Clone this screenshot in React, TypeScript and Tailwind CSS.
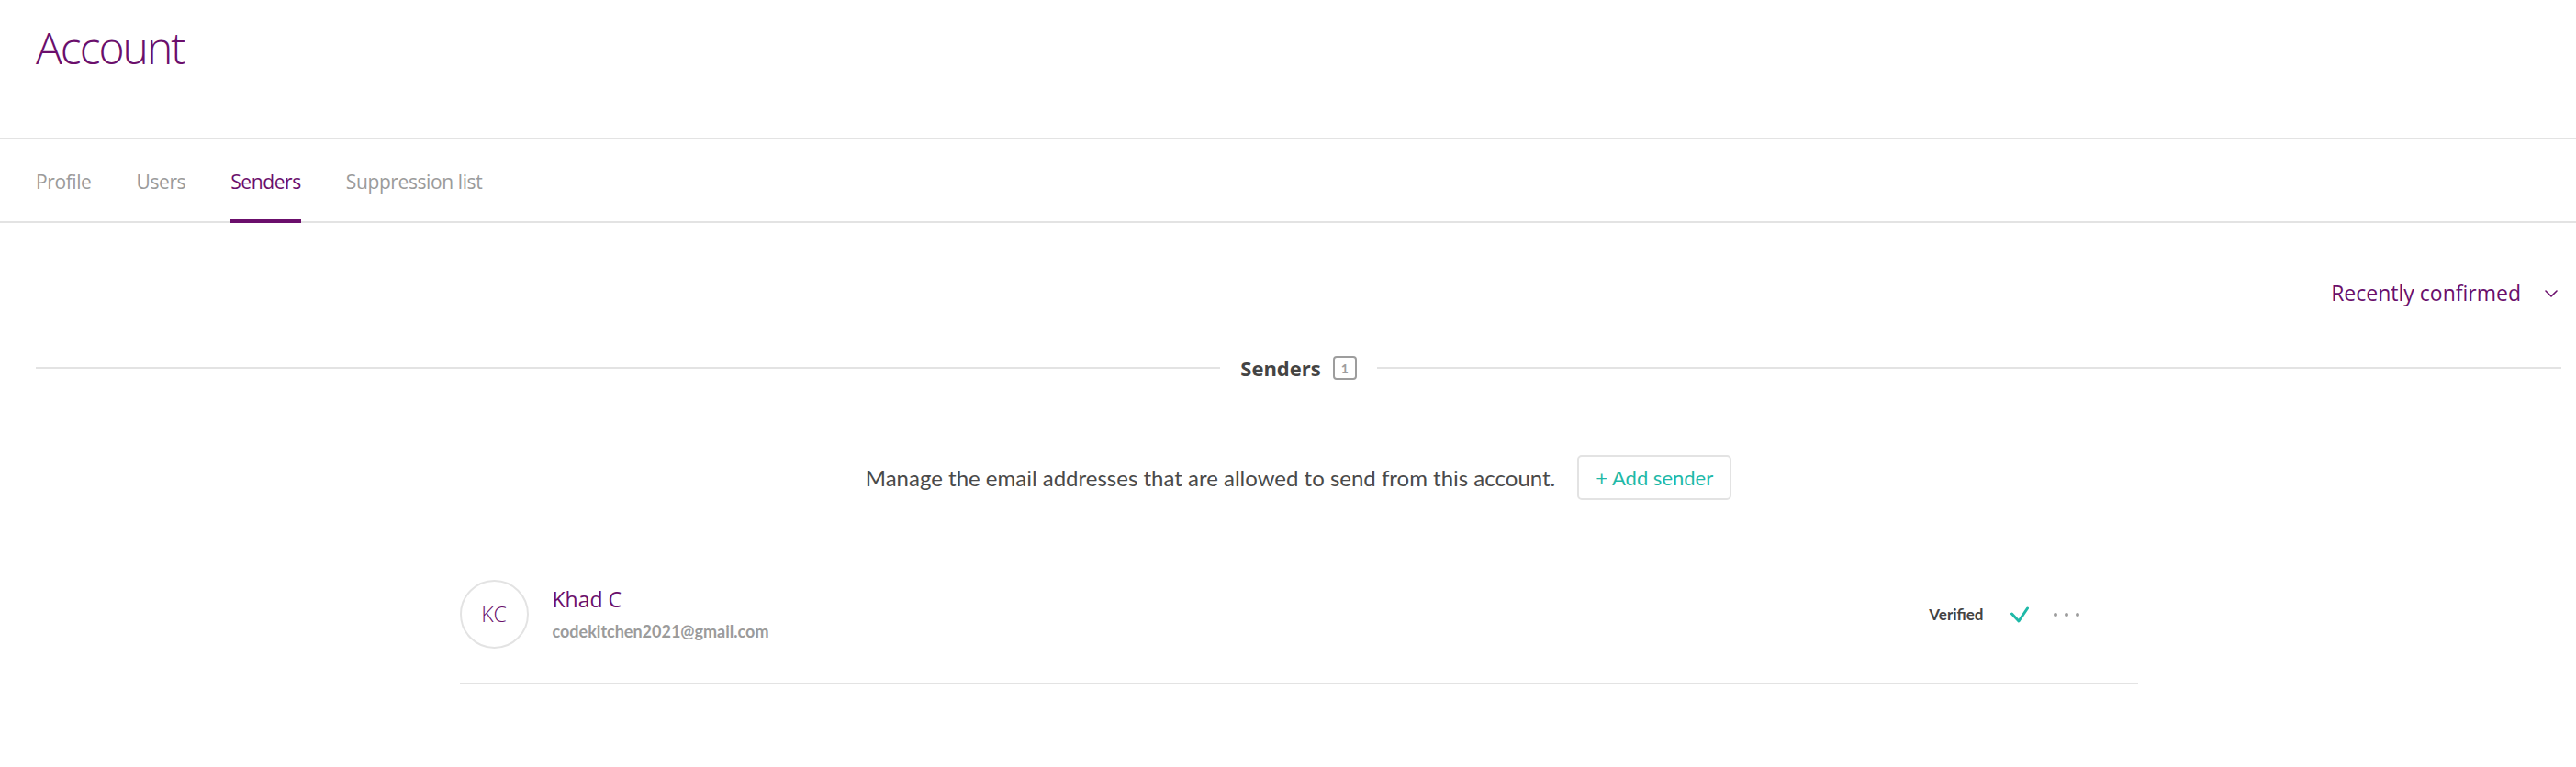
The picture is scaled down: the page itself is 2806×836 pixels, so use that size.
import React from "react";

const PURPLE = "text-[#6b0f6c]";

function Tab({ label, active }: { label: string; active?: boolean }) {
  return (
    <div
      className={
        "flex items-center border-b-4 mb-[-2px] pt-[6px] text-[21px] tracking-[-0.4px] leading-none " +
        (active ? "border-[#6b0f6c] text-[#6b0f6c]" : "border-transparent text-[#9b9b9b]")
      }
      style={{ fontFamily: '"Open Sans", sans-serif' }}
    >
      {label}
    </div>
  );
}

export default function App() {
  return (
    <div className="min-h-[836px] bg-white" style={{ fontFamily: '"Open Sans", sans-serif' }}>
      <header className="h-[152px] border-b-2 border-[#e3e3e3] pl-[39px] pt-[28px]">
        <h1 className={"text-[48px] leading-none font-light tracking-[-2px] " + PURPLE}>Account</h1>
      </header>

      <nav className="flex h-[91px] gap-[49px] border-b-2 border-[#e3e3e3] pl-[39px]">
        <Tab label="Profile" />
        <Tab label="Users" />
        <Tab label="Senders" active />
        <Tab label="Suppression list" />
      </nav>

      <main className="pl-[39px] pr-[16px]">
        <div className="mt-[65px] flex justify-end items-center">
          <span className={"text-[23px] leading-[23px] " + PURPLE}>Recently confirmed</span>
          <svg className="ml-[26px] mr-[4px]" width="14" height="8" viewBox="0 0 14 8" fill="none">
            <path d="M1 1l6 6 6-6" stroke="#6b0f6c" strokeWidth="1.6" strokeLinecap="round" strokeLinejoin="round" />
          </svg>
        </div>

        <div className="mt-[57px] flex items-center h-[26px]">
          <div className="flex-1 h-[2px] bg-[#e3e3e3]" />
          <div className="flex items-center px-[22px]">
            <span className="text-[22px] font-bold leading-none text-[#444444]">Senders</span>
            <span
              className="ml-[13px] flex h-[26px] w-[26px] items-center justify-center rounded-[4px] border-2 border-[#9d9d9d] text-[14px] font-bold text-[#9d9d9d]"
              style={{ fontFamily: 'Lato, sans-serif' }}
            >
              1
            </span>
          </div>
          <div className="flex-1 h-[2px] bg-[#e3e3e3]" />
        </div>

        <div className="mt-[82px] flex items-center justify-center gap-[24px]" style={{ fontFamily: 'Lato, sans-serif' }}>
          <span className="text-[24px] text-[#4a4a4a]">
            Manage the email addresses that are allowed to send from this account.
          </span>
          <button className="h-[49px] rounded-[5px] border-2 border-[#e3e3e3] px-[18px] text-[22px] text-[#1fb9a8]">
            + Add sender
          </button>
        </div>

        <div className="mx-auto mt-[50px] w-[1828px]">
          <div className="flex items-center border-b-2 border-[#e3e3e3] pt-[37px] pb-[37px] pr-[64px]">
            <div className="flex h-[75px] w-[75px] items-center justify-center rounded-full border-2 border-[#e3e3e3]">
              <span className={"text-[23px] font-light leading-none " + PURPLE}>KC</span>
            </div>
            <div className="ml-[26px] flex flex-col">
              <span className={"text-[23px] leading-none " + PURPLE}>Khad C</span>
              <span
                className="mt-[14px] text-[18px] font-bold leading-none text-[#9b9b9b]"
                style={{ fontFamily: 'Lato, sans-serif' }}
              >
                codekitchen2021@gmail.com
              </span>
            </div>
            <div className="ml-auto flex items-center">
              <span className="text-[17px] font-bold text-[#444444]" style={{ fontFamily: 'Lato, sans-serif' }}>
                Verified
              </span>
              <svg className="ml-[29px]" width="20" height="18" viewBox="0 0 20 18" fill="none">
                <path d="M1.5 8l7.5 8L18.5 2" stroke="#1fb9a8" strokeWidth="3" strokeLinecap="round" strokeLinejoin="round" />
              </svg>
              <div className="ml-[27px] flex items-center gap-[8px]">
                <span className="h-[4px] w-[4px] rounded-full bg-[#9d9d9d]" />
                <span className="h-[4px] w-[4px] rounded-full bg-[#9d9d9d]" />
                <span className="h-[4px] w-[4px] rounded-full bg-[#9d9d9d]" />
              </div>
            </div>
          </div>
        </div>
      </main>
    </div>
  );
}
